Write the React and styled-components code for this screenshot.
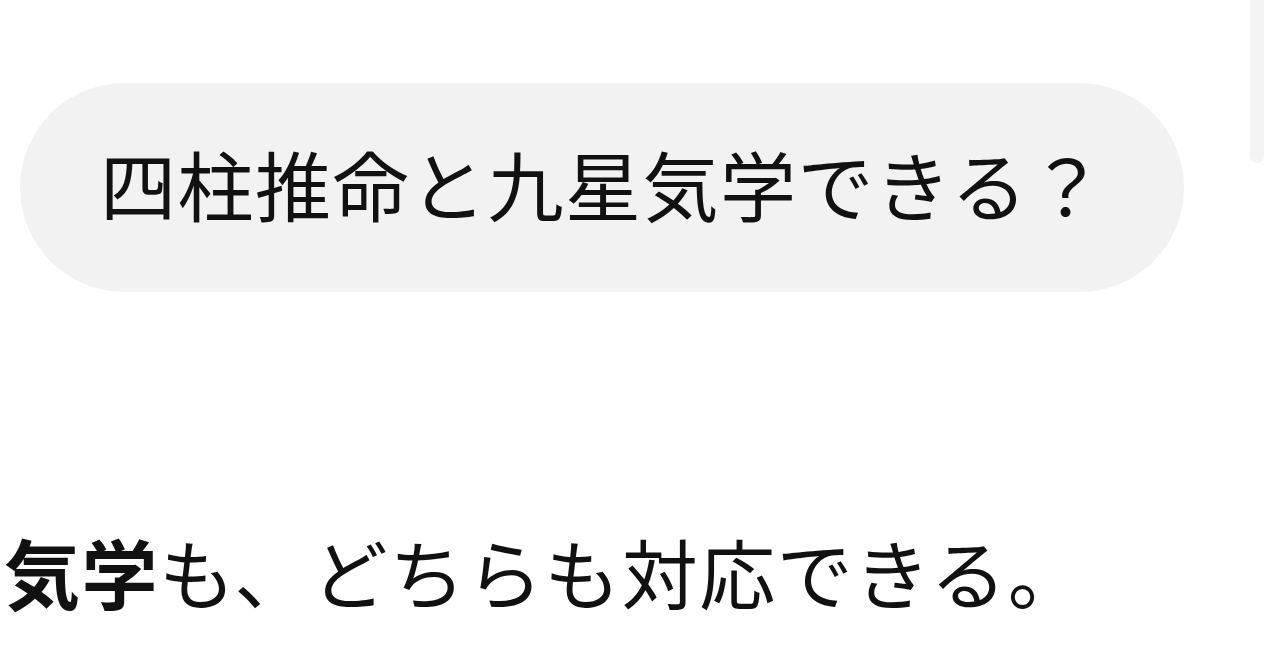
import React from 'react';
import styled, { createGlobalStyle } from 'styled-components';

const GlobalStyle = createGlobalStyle`
  html, body {
    margin: 0;
    padding: 0;
    background: #fff;
    overflow: hidden;
  }
  body {
    font-family: "Noto Sans CJK JP", "Noto Sans", sans-serif;
    color: #111;
  }
`;

const Page = styled.div`
  position: relative;
  width: 1280px;
  height: 670px;
  overflow: hidden;
  display: flex;
  flex-direction: column;
  padding-top: 83px;
  box-sizing: border-box;
`;

const UserRow = styled.div`
  display: flex;
  padding-left: 20px;
`;

const Bubble = styled.div`
  background: #f2f2f2;
  border-radius: 105px;
  height: 209px;
  box-sizing: border-box;
  padding: 0 78px 10px 80px;
  display: flex;
  align-items: center;
  font-size: 76px;
  line-height: 1;
  white-space: nowrap;
  letter-spacing: 1.5px;
`;

const Answer = styled.p`
  margin: 222px 0 0 -151px;
  font-size: 76px;
  line-height: 1.5;
  white-space: nowrap;
  letter-spacing: 1.5px;
`;

const Strong = styled.strong`
  font-weight: 700;
`;

const ScrollThumb = styled.div`
  position: absolute;
  top: 0;
  right: 16px;
  width: 14px;
  height: 163px;
  background: #f4f4f4;
  border-radius: 0 0 7px 7px;
`;

export default function App() {
  return (
    <>
      <GlobalStyle />
      <Page>
        <UserRow>
          <Bubble>四柱推命と九星気学できる？</Bubble>
        </UserRow>
        <Answer>
          <Strong>九星気学</Strong>も、どちらも対応できる。
        </Answer>
        <ScrollThumb />
      </Page>
    </>
  );
}
